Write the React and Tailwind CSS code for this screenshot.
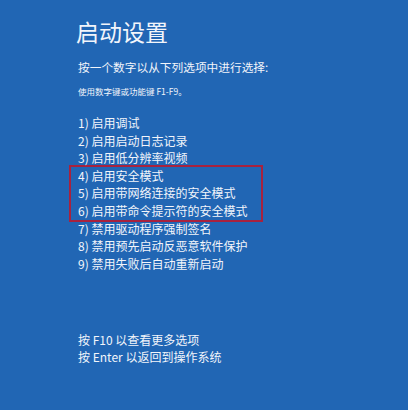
export default function App() {
  const items = [
    '1) 启用调试',
    '2) 启用启动日志记录',
    '3) 启用低分辨率视频',
    '4) 启用安全模式',
    '5) 启用带网络连接的安全模式',
    '6) 启用带命令提示符的安全模式',
    '7) 禁用驱动程序强制签名',
    '8) 禁用预先启动反恶意软件保护',
    '9) 禁用失败后自动重新启动',
  ];
  const font = { fontFamily: '"Noto Sans CJK SC", "Noto Sans", sans-serif' };

  return (
    <div className="w-[408px] h-[410px] bg-[#2166b4] text-[#f2f5fb] overflow-hidden" style={font}>
      <div className="pl-[78px] pt-[16px]">
        <h1 className="text-[23px] leading-[30px] font-normal -ml-[2px]">启动设置</h1>
        <p className="mt-[12px] text-[11.7px] leading-[18px]">按一个数字以从下列选项中进行选择:</p>
        <p className="mt-[9px] text-[8.5px] leading-[12px]">使用数字键或功能键 F1-F9。</p>

        <div className="mt-[17px] text-[12px] leading-[17.6px] whitespace-nowrap">
          {items.slice(0, 3).map(t => <div key={t}>{t}</div>)}
          <div className="w-[194px] -ml-[9px] pl-[7px] border-2 border-[#a8223e] -my-[2px]">
            {items.slice(3, 6).map(t => <div key={t}>{t}</div>)}
          </div>
          {items.slice(6).map(t => <div key={t}>{t}</div>)}
        </div>

        <div className="mt-[59px] text-[12px] leading-[17px] whitespace-nowrap">
          <div>按 F10 以查看更多选项</div>
          <div>按 Enter 以返回到操作系统</div>
        </div>
      </div>
    </div>
  );
}
